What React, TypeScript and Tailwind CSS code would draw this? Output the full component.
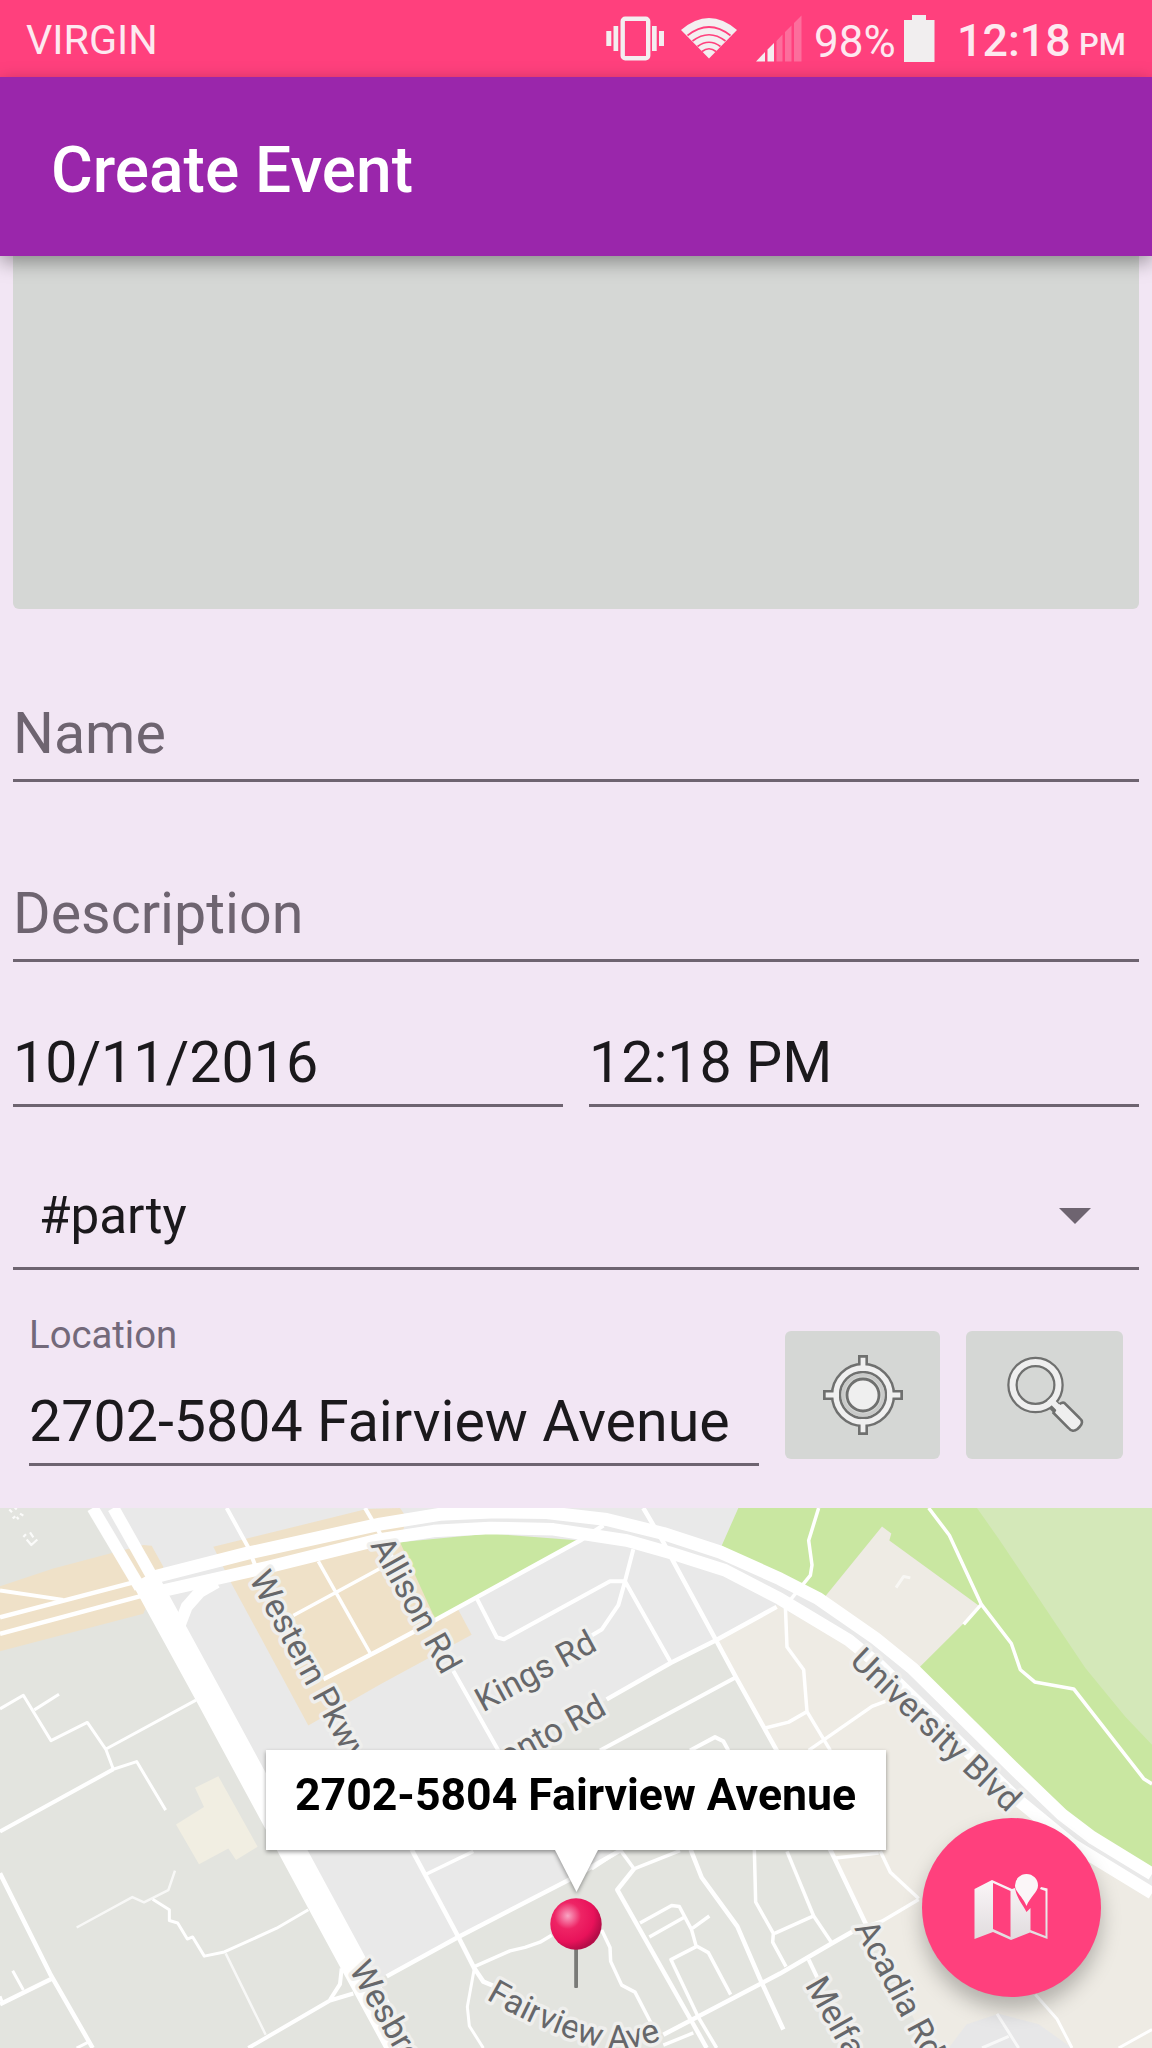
import React from "react";

const mapLabels: { text: string; x: number; y: number; angle: number; size: number; anchor?: "end" }[] = [
  { text: "Western Pkwy", x: 248.5, y: 70.5, angle: 61.6, size: 33.8 },
  { text: "Allison Rd", x: 370, y: 37, angle: 61.1, size: 33.6 },
  { text: "Kings Rd", x: 483, y: 204.5, angle: -28.6, size: 33.5 },
  { text: "Toronto Rd", x: 608, y: 205.5, angle: -28.6, size: 33.5, anchor: "end" },
  { text: "University Blvd", x: 848.5, y: 154.5, angle: 43.5, size: 33.7 },
  { text: "Acadia Rd", x: 854, y: 420, angle: 62, size: 33.6 },
  { text: "Melfa Rd", x: 804.5, y: 477, angle: 60.5, size: 34 },
  { text: "Wesbrook Mall", x: 348.5, y: 461, angle: 60.5, size: 33.8 },
];

function Road({ d, w = 4, o = 1 }: { d: string; w?: number; o?: number }) {
  return (
    <path
      d={d}
      fill="none"
      stroke="#fff"
      strokeOpacity={o}
      strokeWidth={w}
      strokeLinejoin="round"
      vectorEffect="non-scaling-stroke"
    />
  );
}

function MapGeometry() {
  return (
    <svg className="absolute inset-0 h-full w-full" viewBox="0 22 3456 1546" preserveAspectRatio="none">
      <rect y="22" width="3456" height="1546" fill="#e9e9e9" />
      <path d="M0 22H290L445 240L1198 1568H0Z" fill="#e3e4df" />
      <path d="M0 246L160 195L330 152L430 128L455 130L490 190L430 325L0 432Z" fill="#efe1c8" />
      <path d="M640 133L1100 25L1200 22L1220 50L1200 120L1370 305L1415 385L1140 527L925 645L690 230Z" fill="#efe1c8" />
      <path d="M585 823L655 790L773 992L708 1030L685 997L597 1042L528 928L612 878Z" fill="#f1eee2" />
      <path d="M2150 400L1490 740L1840 1010L1140 1370L1080 1400L1198 1568H2850L2400 800Z" fill="#e3e4df" />
      <path d="M2331 300L2146 400L2331 716L2496 1010L2596 1210L2786 1568H3456V1125L3056 860L2636 465Z" fill="#eeebe4" />
      <path d="M2215 22L2165 130L2456 280L2626 395L3046 770L3186 900L3456 1060V22Z" fill="#c9e7a1" />
      <path d="M2931 22L2996 110L3256 480L3376 620L3456 700V22Z" fill="#d4e8b9" />
      <path d="M2646 75L2674 95L2668 115L2941 305L2751 485L2626 395L2476 275Z" fill="#eeebe4" />
      <path d="M1200 120L1470 95L1740 115L1305 338Z" fill="#c9e7a1" />
      <path d="M2846 1568L2900 1500L2996 1470L3116 1500L3216 1568Z" fill="#e7e7e8" />

      {/* Western blocks */}
      <Road d="M0 258L190 285" />
      <Road d="M0 335L400 235" w={4.5} />
      <Road d="M0 382L430 272" w={4.5} />
      <Road d="M680 22L745 135L765 185L800 240" />
      <Road d="M955 175L1112 440M880 330L1140 195M1140 195L1170 180" w={3.5} />
      <Road d="M970 512L1140 428L1250 372L1740 115L1810 72" w={4.5} />
      <Road d="M1095 22L1140 95L1180 170" />
      <Road d="M650 235L600 262L560 305L538 360" w={12} />
      <Road d="M0 597L70 558L153 688L262 636L318 714L340 770L410 748L497 887M103 600L177 555M318 712L588 572" w={3} />
      <Road d="M0 948L340 770" />
      <Road d="M0 1068L150 1355L278 1568M0 1443L155 1370" w={4.5} />
      <Road d="M38 1347L70 1402M0 1420L8 1440M230 1568L268 1550" w={3} />
      <Road d="M230 1223L397 1136L432 1151L505 1116L525 1060M677 1297L797 1530" w={2.5} o={0.75} />
      <Road d="M458 1142L508 1172V1203L533 1210L562 1256L578 1250L613 1305L673 1293L830 1225L925 1172" w={3} />
      <Road d="M745 1568L990 1432L1060 1412M1025 1340L1020 1385L990 1430" />
      <Road d="M28 26L36 34M42 18L50 26M38 52L46 46M50 48L56 54M60 38L70 44M70 105L78 97M80 112L94 128L112 112M90 92L100 106" w={2.2} o={0.85} />

      {/* Central blocks */}
      <g transform="translate(1140 0)">
        <Road d="M20 1363L235 1250L560 1090L720 1003" w={4.5} />
        <Road d="M790 22L850 120L880 175L1005 395L1070 510L1190 716L1356 1010L1456 1210L1480 1250" w={4.5} />
        <Road d="M760 140L735 232L690 232L372 398L350 392L290 280M735 232L715 300L665 370L630 390M735 232L873 465" />
        <Road d="M1190 305L1005 402L873 465L680 570" w={4.5} />
        <Road d="M1065 508L660 716M930 716L1005 678L1030 690L1045 716M215 480L355 716" />
        <Road d="M95 1000L235 1250L283 1340L310 1378L345 1392" w={4.5} />
        <Road d="M135 1072L280 1005M283 1335L390 1290L435 1280L480 1265L515 1245" w={3.5} />
        <Road d="M283 1340L262 1450L268 1505L310 1568" w={3} />
        <Road d="M665 1230L690 1280L692 1320L725 1388L765 1408L815 1500M720 1000L762 1055L900 1003M635 1055L715 1005" w={3.5} />
        <Road d="M762 1055L712 1115L940 1500L980 1568" w={4.5} />
        <Road d="M780 1210L875 1160L898 1163L935 1230L948 1275L985 1295L1052 1415M808 1250L910 1195M938 1225L988 1190M950 1277L873 1315L955 1480L1010 1568" w={3.5} />
        <Road d="M932 1000L965 1080L1072 1220L1140 1370L1210 1515" w={4.5} />
        <Road d="M850 1530L1200 1355L1356 1268L1426 1230" w={4.5} />
        <Road d="M850 1560L940 1525M1123 1000L1127 1150L1180 1240L1178 1265L1218 1335" w={3.5} />
      </g>

      {/* Eastern paths */}
      <g transform="translate(2256 0)">
        <Road d="M200 22L170 115L180 185L175 215L115 285" w={3.5} />
        <Road d="M530 22L592 100L688 298L778 410L805 485L848 520L965 540L1175 797L1200 812M688 298L635 355" w={3.5} />
        <Road d="M432 250L455 218L475 222" w={3} o={0.6} />
        <Road d="M100 300L105 420L155 485L165 605L235 716M165 605L110 635L40 652M170 716L360 590L430 565" w={3.5} />
        <Road d="M105 1005L185 1190L240 1268M68 1240L185 1190M245 1025L380 1010M385 1005L415 1065L500 1140M310 1230L390 1205L500 1143" w={3.5} />
        <Road d="M170 1315L200 1375" />
        <Road d="M850 1415L915 1485L960 1568M1100 1568L1200 1515" w={3} />
        <Road d="M735 1470L800 1568M690 1568L770 1535" w={3} o={0.7} />
      </g>

      {/* Arterials */}
      <Road d="M278 22L420 250" w={12} />
      <Road d="M340 22L460 225" w={12} />
      <Road d="M432 220L635 575L972 1170L1198 1568" w={27} />
      <Road d="M440 225L740 152L1140 68L1320 40L1490 33L1640 35L1820 55L1990 95L2160 148L2340 225L2456 282L2626 395L2736 480L3046 772L3186 900L3276 965L3456 1070" w={13} />
      <Road d="M460 265L800 192L1140 112L1300 88L1470 79L1660 83L1880 115L2010 150L2175 200L2340 282L2546 400L2636 470L3056 860L3216 985L3456 1125" w={12.5} />
    </svg>
  );
}

function MapText() {
  return (
    <svg
      className="absolute inset-0 h-full w-full font-['Roboto',sans-serif]"
      viewBox="0 0 1152 540"
      fill="#66676a"
      stroke="#efefed"
      strokeWidth="7"
      strokeLinejoin="round"
      style={{ paintOrder: "stroke" }}
    >
      {mapLabels.map((l) => (
        <text key={l.text} fontSize={l.size} textAnchor={l.anchor} transform={`translate(${l.x} ${l.y}) rotate(${l.angle})`}>
          {l.text}
        </text>
      ))}
      <path id="fairview" d="M486 491C520 511 560 529 595 538C620 545 642 540 690 522" fill="none" stroke="none" />
      <text fontSize="33.6">
        <textPath href="#fairview">Fairview Ave</textPath>
      </text>
    </svg>
  );
}

function Pin() {
  return (
    <svg className="absolute left-[548px] top-[388px] h-[94px] w-14" viewBox="0 0 56 94">
      <defs>
        <radialGradient id="pinHead" cx="0.34" cy="0.34" r="0.68">
          <stop offset="0" stopColor="#f9a5c4" />
          <stop offset="0.38" stopColor="#ee2465" />
          <stop offset="0.75" stopColor="#e8125a" />
          <stop offset="1" stopColor="#b50d48" />
        </radialGradient>
      </defs>
      <rect x="26.2" y="50" width="3.8" height="42" rx="1" fill="#797a77" />
      <circle cx="28" cy="28" r="25.7" fill="url(#pinHead)" />
    </svg>
  );
}

function MapView() {
  return (
    <section className="relative h-[540px] overflow-hidden">
      <MapGeometry />
      <MapText />
      <div className="absolute left-[266px] top-[242px] drop-shadow-[0_2px_2px_rgba(0,0,0,0.4)]">
        <div className="h-[100px] w-[620px] bg-white pl-[29px] pt-[15px] text-[44.6px] font-bold leading-[60px] whitespace-nowrap text-black">
          2702-5804 Fairview Avenue
        </div>
        <svg className="ml-[289px] block h-[42px] w-[43px]" viewBox="0 0 43 42">
          <path d="M0 0H43L21.5 42Z" fill="#fff" />
        </svg>
      </div>
      <Pin />
      <button
        aria-label="Open map"
        className="absolute left-[921.5px] top-[309.5px] h-[179px] w-[179px] rounded-full bg-[#ff407d] shadow-[0_12px_20px_rgba(0,0,0,0.25)]"
      >
        <svg className="h-full w-full" viewBox="0 0 179 179">
          <defs>
            <linearGradient id="fold" x1="0" y1="0" x2="0" y2="1">
              <stop offset="0" stopColor="#fbf6f8" />
              <stop offset="1" stopColor="#e0dcde" />
            </linearGradient>
          </defs>
          <path
            d="M52.5 71L70 62L90 71L93 70C95 81 100 85 104.5 94L108.5 90V112L123.5 118V73L118 71L119 69L125.5 70.5V121L108 114.5L89 122L71 114L52.5 121Z M71 65V111L88.5 119V73Z"
            fill="url(#fold)"
            fillRule="evenodd"
          />
          <path d="M104.5 88C101 79 93 74 93 67.5A11.5 11.5 0 0 1 116 67.5C116 74 108 79 104.5 88Z" fill="#fbf6f8" />
        </svg>
      </button>
    </section>
  );
}

function StatusBar() {
  return (
    <div className="flex h-[77px] items-start justify-between bg-[#ff407d] text-[#fde9f0]">
      <span className="ml-[26px] mt-[10px] text-[41.3px] leading-[60px]">VIRGIN</span>
      <div className="flex">
        <svg className="h-[77px] w-[208px]" viewBox="602 0 208 77" fill="#f4eef0">
          <rect x="622.7" y="18.7" width="25.5" height="39.5" rx="2.5" fill="none" stroke="#f4eef0" strokeWidth="4.4" />
          <rect x="606.3" y="31" width="5" height="15" />
          <rect x="613.5" y="26" width="4.7" height="25" />
          <rect x="652" y="26" width="4.7" height="25" />
          <rect x="659" y="31" width="5" height="15" />
          <path d="M681 30Q709 6 737 30L709 58.5Z" />
          <g fill="none" stroke="#ff407d" strokeWidth="1.7">
            <path d="M687.5 35.5Q709 18.5 730.5 35.5" />
            <path d="M692.5 41Q709 28.5 725.5 41" />
            <path d="M697.5 46.5Q709 38 720.5 46.5" />
            <path d="M702 51.5Q709 46 716 51.5" />
          </g>
          <path d="M756 61.5L765 52V61.5ZM767.5 49.5L774 43V61.5H767.5Z" />
          <g opacity="0.27">
            <path d="M776.5 41L782.5 34.5V61.5H776.5ZM785 32L791.5 25.5V61.5H785ZM794 23L801.5 15.5V61.5H794Z" />
          </g>
        </svg>
        <span className="ml-[4px] mt-[12px] w-[84px] text-[44px] leading-[60px]">98%</span>
        <svg className="ml-[6px] h-[77px] w-[36px]" viewBox="904 0 36 77">
          <path d="M904 20H912V15H926V20H934.5V62H904Z" fill="#f1eeef" />
        </svg>
        <span className="ml-[17px] mt-[11px] w-[122px] text-[44.8px] font-medium leading-[60px]">12:18</span>
        <span className="mr-[23px] mt-[15px] w-[50px] text-[31px] font-medium leading-[60px]">PM</span>
      </div>
    </div>
  );
}

function Field({ className, children }: { className: string; children: React.ReactNode }) {
  return (
    <div className={`flex flex-col justify-end border-b-[3px] border-[#6e6470] leading-[60px] whitespace-nowrap ${className}`}>
      {children}
    </div>
  );
}

function LocateIcon() {
  return (
    <svg className="h-[84px] w-[84px]" viewBox="0 0 84 84" fill="none">
      <g stroke="#6f706f">
        <path d="M42 2V20M42 64V82M2 42H20M64 42H82" strokeWidth="10" />
        <circle cx="42" cy="42" r="27" strokeWidth="10.5" />
      </g>
      <g stroke="#f0f0f0">
        <circle cx="42" cy="42" r="27" strokeWidth="5.5" />
        <path d="M42 4.7V18M42 66V79.3M4.7 42H18M66 42H79.3" strokeWidth="4.8" />
      </g>
      <circle cx="42" cy="42" r="20" stroke="#c9cac9" strokeWidth="3" />
      <circle cx="42" cy="42" r="16" fill="#efefef" stroke="#6f706f" strokeWidth="2.8" />
    </svg>
  );
}

function SearchIcon() {
  return (
    <svg className="h-[84px] w-[84px]" viewBox="0.5 0 84 84" fill="none">
      <circle cx="33" cy="32" r="23" stroke="#6f706f" strokeWidth="10.5" />
      <path d="M47 48L58 59" stroke="#6f706f" strokeWidth="11" />
      <path
        d="M53 56L51 60L66 75Q70 80 75 76L77 74Q82 69 77 65L62 50Q60 49 57 51"
        fill="#efefef"
        stroke="#6f706f"
        strokeWidth="2.6"
      />
      <path d="M47 46L60 59" stroke="#efefef" strokeWidth="6" />
      <circle cx="33" cy="32" r="23" stroke="#efefef" strokeWidth="6" />
    </svg>
  );
}

export default function App() {
  return (
    <div className="flex h-[2048px] w-[1152px] flex-col overflow-hidden bg-[#f2e6f4] font-['Roboto',sans-serif]">
      <StatusBar />
      <header className="relative z-10 flex h-[179px] items-center bg-[#9a26ab] pl-[51px] pt-[8px] text-[64px] font-medium text-white shadow-[0_6px_18px_rgba(0,0,0,0.36)]">
        Create Event
      </header>
      <div className="mx-[13px] h-[353px] rounded-b-md bg-[#d5d7d5]" />
      <form className="mx-[13px] text-[57.35px] text-[#1b191c]">
        <Field className="h-[173px] pb-[15px] text-[#6e6470]">Name</Field>
        <Field className="h-[180px] pb-[15px] text-[#6e6470]">Description</Field>
        <div className="grid grid-cols-2 gap-[26px]">
          <Field className="h-[145px] pb-[11px]">10/11/2016</Field>
          <Field className="h-[145px] pb-[11px]">12:18 PM</Field>
        </div>
        <Field className="h-[163px] pb-[21px] text-[51.2px]">
          <div className="flex items-center justify-between pl-[26px] pr-[48px]">
            <span>#party</span>
            <svg className="h-4 w-8" viewBox="0 0 32 16">
              <path d="M0 0H32L16 16Z" fill="#6e6470" />
            </svg>
          </div>
        </Field>
        <div className="flex h-[238px] items-start pl-[16px]">
          <Field className="h-[196px] w-[730px] pb-[11px]">
            <span className="mb-[37px] text-[38.3px] leading-[40px] text-[#73697a]">Location</span>
            <span>2702-5804 Fairview Avenue</span>
          </Field>
          <button type="button" aria-label="Use current location" className="ml-[26px] mt-[61px] flex h-[128px] w-[155px] items-center justify-center rounded-md bg-[#d5d7d5]">
            <LocateIcon />
          </button>
          <button type="button" aria-label="Search location" className="ml-[26px] mt-[61px] flex h-[128px] w-[157px] items-center justify-center rounded-md bg-[#d5d7d5]">
            <SearchIcon />
          </button>
        </div>
      </form>
      <MapView />
    </div>
  );
}
